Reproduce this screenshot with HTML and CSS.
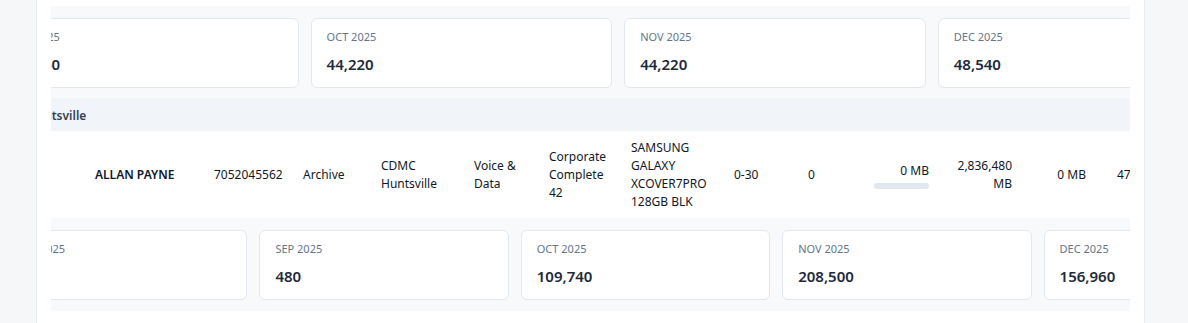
FILE: index.html
```html
<!DOCTYPE html>
<html lang="en">
<head>
    <meta charset="UTF-8">
    <meta name="viewport" content="width=device-width, initial-scale=1.0">
    <title>Line usage</title>
    <link rel="stylesheet" href="styles.css">
</head>
<body>
    <div class="panel">
        <div class="scroller">
            <div class="track">
                <div class="detail-row">
                    <div class="month-grid four">
                        <div class="month-card"><div class="month-label">SEP 2025</div><div class="month-value">38,760</div></div>
                        <div class="month-card"><div class="month-label">OCT 2025</div><div class="month-value">44,220</div></div>
                        <div class="month-card"><div class="month-label">NOV 2025</div><div class="month-value">44,220</div></div>
                        <div class="month-card"><div class="month-label">DEC 2025</div><div class="month-value">48,540</div></div>
                    </div>
                </div>

                <div class="group-row"><span class="group-name">CDMC Huntsville</span></div>

                <div class="line-row">
                    <div class="cell spacer"></div>
                    <div class="cell name">ALLAN PAYNE</div>
                    <div class="cell phone">7052045562</div>
                    <div class="cell status">Archive</div>
                    <div class="cell location">CDMC Huntsville</div>
                    <div class="cell plan-type">Voice &amp; Data</div>
                    <div class="cell plan">Corporate Complete 42</div>
                    <div class="cell device">SAMSUNG GALAXY XCOVER7PRO 128GB BLK</div>
                    <div class="cell aging">0-30</div>
                    <div class="cell count">0</div>
                    <div class="cell usage">
                        <div>0 MB</div>
                        <div class="usage-bar"></div>
                    </div>
                    <div class="cell total">2,836,480 MB</div>
                    <div class="cell overage">0 MB</div>
                    <div class="cell last">47,360 MB</div>
                </div>

                <div class="detail-row">
                    <div class="month-grid five">
                        <div class="month-card"><div class="month-label">AUG 2025</div><div class="month-value">240</div></div>
                        <div class="month-card"><div class="month-label">SEP 2025</div><div class="month-value">480</div></div>
                        <div class="month-card"><div class="month-label">OCT 2025</div><div class="month-value">109,740</div></div>
                        <div class="month-card"><div class="month-label">NOV 2025</div><div class="month-value">208,500</div></div>
                        <div class="month-card"><div class="month-label">DEC 2025</div><div class="month-value">156,960</div></div>
                    </div>
                </div>
            </div>
        </div>
    </div>
</body>
</html>
```

FILE: styles.css
```css
body{
    margin: 0;
    background-color: #f6f7f9;
    font-family: "Noto Sans", "Open Sans", sans-serif;
    color: #1e293b;
}
.panel{
    box-sizing: border-box;
    width: 1109px;
    min-height: 340px;
    margin-left: 36px;
    padding: 6px 14px 0 14px;
    background-color: #ffffff;
    border-left: 1px solid #e8ebf0;
    border-right: 1px solid #e8ebf0;
}
.scroller{
    overflow: hidden;
}
.track{
    width: 1400px;
    margin-left: -91px;
}

/* monthly usage cards */
.detail-row{
    background-color: #f8f9fb;
    padding: 12px 0 10px 37px;
}
.line-row + .detail-row{
    padding-bottom: 11px;
    padding-left: 38px;
}
.month-grid{
    display: grid;
    gap: 12px;
}
.month-grid.four{
    grid-template-columns: repeat(4, 301.6px);
}
.month-grid.five{
    grid-template-columns: repeat(5, 249.4px);
}
.month-card{
    background-color: #ffffff;
    border: 1px solid #e2e8f0;
    border-radius: 6px;
    padding: 10px 15px 12px 15px;
}
.month-label{
    font-size: 11px;
    line-height: 16px;
    color: #64748b;
    margin-bottom: 8px;
}
.month-value{
    font-size: 15px;
    line-height: 22px;
    font-weight: 600;
    color: #1e293b;
}

/* group header */
.group-row{
    box-sizing: border-box;
    background-color: #f1f4f8;
    height: 33px;
    display: flex;
    align-items: center;
    padding: 2px 0 0 29px;
}
.group-name{
    font-size: 12px;
    font-weight: 600;
    color: #334155;
}

/* data row */
.line-row{
    display: flex;
    align-items: center;
    background-color: #ffffff;
    padding: 8px 0 7px 0;
    font-size: 12px;
    line-height: 18px;
    color: #111827;
}
.cell{
    box-sizing: border-box;
    flex: none;
    padding: 0 8px;
}
.spacer{ width: 127px; }
.name{
    width: 119px;
    font-weight: 600;
    color: #0f172a;
}
.phone{ width: 89px; }
.status{ width: 78px; }
.location{ width: 93px; }
.plan-type{ width: 75px; }
.plan{ width: 82px; }
.device{ width: 103px; }
.aging{ width: 74px; }
.count{ width: 66px; }
.usage{
    width: 71px;
    text-align: right;
}
.usage-bar{
    height: 6px;
    margin-top: 3px;
    border-radius: 3px;
    background-color: #e2e8f0;
}
.total{
    width: 83px;
    text-align: right;
}
.overage{
    width: 74px;
    text-align: right;
}
.last{
    width: 140px;
    padding-left: 23px;
}
```
